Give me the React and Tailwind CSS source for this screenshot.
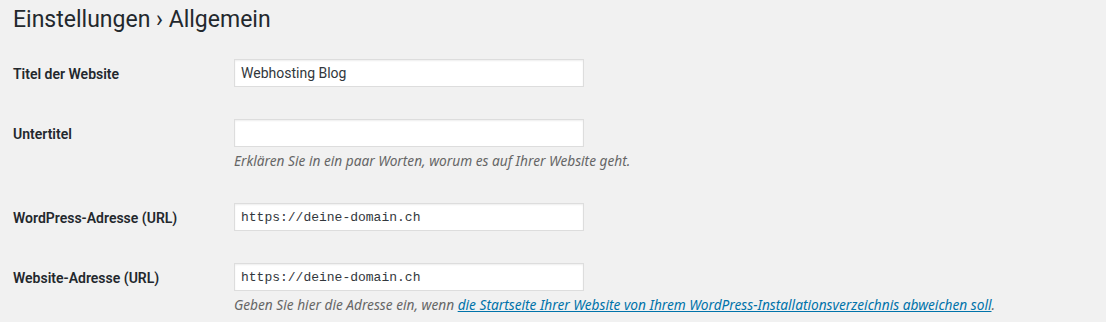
const sans = { fontFamily: 'Roboto, "Noto Sans", sans-serif' }

function Row({ label, value, mono, desc, className = '' }) {
  return (
    <div className={`flex ${className}`}>
      <div className="w-[221px] h-[28px] pt-[2px] flex items-center text-[14px] font-semibold text-[#23282d]">
        {label}
      </div>
      <div className="flex flex-col">
        <input
          readOnly
          value={value}
          className={`w-[350px] h-[28px] bg-white border border-[#ddd] shadow-[inset_0_1px_2px_rgba(0,0,0,0.07)] px-[6px] text-[#32373c] outline-none ${
            mono ? 'font-["Liberation_Mono",monospace] text-[13px]' : 'text-[14px]'
          }`}
        />
        {desc && (
          <p className='mt-[4px] leading-[20px] text-[13.7px] italic text-[#666] whitespace-nowrap font-["Noto_Sans",sans-serif]'>
            {desc}
          </p>
        )}
      </div>
    </div>
  )
}

export default function App() {
  return (
    <div className="w-[1106px] h-[322px] bg-[#f1f1f1] pl-[13px] overflow-hidden" style={sans}>
      <h1 className="pt-[5px] text-[23px] leading-[29px] font-normal text-[#23282d]">Einstellungen › Allgemein</h1>

      <Row className="mt-[25px]" label="Titel der Website" value="Webhosting Blog" />
      <Row
        className="mt-[32px]"
        label="Untertitel"
        value=""
        desc="Erklären Sie in ein paar Worten, worum es auf Ihrer Website geht."
      />
      <Row className="mt-[32px]" label="WordPress-Adresse (URL)" value="https://deine-domain.ch" mono />
      <Row
        className="mt-[32px]"
        label="Website-Adresse (URL)"
        value="https://deine-domain.ch"
        mono
        desc={
          <>
            Geben Sie hier die Adresse ein, wenn{' '}
            <a href="#" className="text-[#0073aa] underline">
              die Startseite Ihrer Website von Ihrem WordPress-Installationsverzeichnis abweichen soll
            </a>
            .
          </>
        }
      />
    </div>
  )
}
